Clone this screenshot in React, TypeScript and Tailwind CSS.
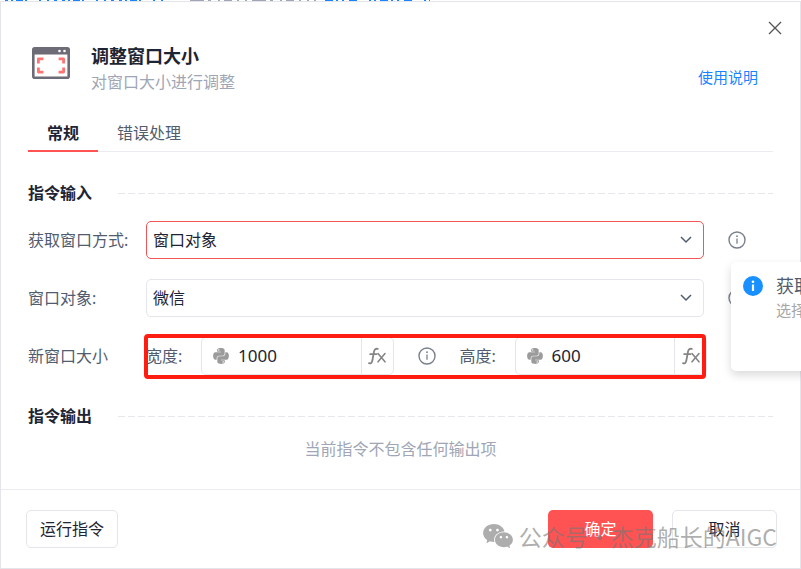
import { useState } from "react";
import { FaPython } from "react-icons/fa";
import { AiFillWechat } from "react-icons/ai";

const TABS = ["常规", "错误处理"];

// Edge of the page that lies behind the dialog
function BackdropEdge() {
  return (
    <svg className="block h-px w-full" shapeRendering="crispEdges" aria-hidden="true">
      <g strokeWidth="2" fill="none">
        <path d="M5 0H167" stroke="#1a84ff" strokeDasharray="3 3 2 3 7 2 2 12 2 6 2 5 3 5" />
        <path d="M190 0H316" stroke="#a0a6b5" strokeDasharray="14 4 3 7 2 4 8 5 2 6 2 5" />
        <path d="M325 0H430" stroke="#1a84ff" strokeDasharray="8 3 2 4 2 5 8 12 2 3 2 4" />
      </g>
    </svg>
  );
}

function InfoIcon() {
  return (
    <svg viewBox="0 0 18 18" className="block size-[18px] text-[#7a808c]" fill="none" stroke="currentColor" aria-hidden="true">
      <circle cx="9" cy="9" r="8" strokeWidth="1.4" />
      <path d="M9 7.6v5.2" strokeWidth="1.3" />
      <circle cx="9" cy="5.2" r="0.9" fill="currentColor" stroke="none" />
    </svg>
  );
}

function InfoButton({ label }: { label: string }) {
  return (
    <button type="button" aria-label={label} className="shrink-0">
      <InfoIcon />
    </button>
  );
}

function FxIcon() {
  return (
    <svg viewBox="0 0 20 18" className="h-[18px] w-5 shrink-0" fill="none" stroke="#858585" strokeWidth="1.8" strokeLinecap="round" aria-hidden="true">
      <path d="M2 16.2c1.8.5 2.9-.4 3.3-2.4L7 4.600C7.400 2.300 8.700 1.300 10.800 1.900" />
      <path d="M3.200 7.200h6.300" />
      <path d="M11 6.600l7 8.200M18 6.600l-7 8.200" strokeWidth="1.600" />
    </svg>
  );
}

function WindowIcon() {
  return (
    <svg viewBox="0 0 38 32" className="mb-3 h-8 w-[38px] shrink-0" aria-hidden="true">
      <rect x="1.3" y="1.3" width="35.4" height="29.4" rx="1.5" fill="#fff" stroke="#6c6b76" strokeWidth="2.6" />
      <path d="M1 2h36v5.5H1z" fill="#6c6b76" />
      <circle cx="27.5" cy="4" r="1.3" fill="#fff" />
      <circle cx="32.5" cy="4" r="1.3" fill="#fff" />
      <path
        d="M6.400 16.500v-4.600h5M26.600 11.900h5v4.600M6.400 20.500v4.600h5M26.600 25.100h5v-4.600"
        fill="none"
        stroke="#ff7373"
        strokeWidth="2.8"
        strokeLinejoin="round"
      />
    </svg>
  );
}

function SectionTitle({ children }: { children: string }) {
  return (
    <div className="flex h-6 items-center gap-[26px]">
      <h2 className="text-base leading-6 font-bold">{children}</h2>
      <div className="h-px flex-1 bg-[repeating-linear-gradient(90deg,#e6e7ea_0_7px,transparent_7px_10px)]" />
    </div>
  );
}

interface SelectRowProps {
  id: string;
  label: string;
  value: string;
  active?: boolean;
}

function SelectRow({ id, label, value, active }: SelectRowProps) {
  return (
    <div className="flex items-center">
      <label htmlFor={id} className="w-[118px] shrink-0 text-base text-[#515c6e]">
        {label}
      </label>
      <div className="relative flex-1">
        <select
          id={id}
          className={[
            "block h-[38px] w-full appearance-none rounded-[5px] border bg-white px-1.5 text-base outline-none",
            active ? "border-[#f25555]" : "border-[#e4e6eb]",
          ].join(" ")}
        >
          <option>{value}</option>
        </select>
        <svg viewBox="0 0 12 8" className="pointer-events-none absolute top-[15px] right-3 h-2 w-3" fill="none" stroke="#515c6e" strokeWidth="1.5" aria-hidden="true">
          <path d="M1 1l5 5 5-5" />
        </svg>
      </div>
      <div className="flex w-[69px] shrink-0 pl-6">
        <InfoButton label={`${label} 说明`} />
      </div>
    </div>
  );
}

function SizeField({ id, label, initial }: { id: string; label: string; initial: string }) {
  const [value, setValue] = useState(initial);
  return (
    <div className="flex min-w-0 flex-1 items-center">
      <label htmlFor={id} className="w-[55px] shrink-0 text-base text-[#515c6e]">
        {label}
      </label>
      <div className="flex h-[38px] min-w-0 flex-1 rounded-[5px] border border-[#e4e6eb]">
        <div className="flex min-w-0 flex-1 items-center gap-2 pl-2.5">
          <FaPython className="size-[18px] shrink-0 text-[#9b9b9b]" aria-hidden="true" />
          <input
            id={id}
            value={value}
            onChange={(e) => setValue(e.target.value)}
            className="w-full min-w-0 bg-transparent text-[17px] outline-none"
          />
        </div>
        <button type="button" aria-label={`${label} 表达式`} className="flex w-8 shrink-0 items-center justify-center border-l border-[#e4e6eb]">
          <FxIcon />
        </button>
      </div>
    </div>
  );
}

export default function App() {
  const [tab, setTab] = useState(TABS[0]);

  return (
    <div className="relative flex min-h-screen flex-col overflow-hidden bg-white font-['Noto_Sans','Noto_Sans_CJK_SC',sans-serif] text-[#1d2433]">
      <BackdropEdge />
      <div className="flex flex-1 flex-col border border-[#e4e5eb]">
        <header className="px-[27px] pt-[17px]">
          <div className="flex justify-end">
            <button type="button" aria-label="关闭" className="-mr-[11px]">
              <svg viewBox="0 0 18 18" className="size-[18px]" stroke="#555" strokeWidth="1.3" aria-hidden="true">
                <path d="M3 3l12 12M15 3L3 15" />
              </svg>
            </button>
          </div>
          <div className="mt-1.5 flex items-center pl-1">
            <WindowIcon />
            <div className="ml-[21px] flex-1">
              <h1 className="text-lg leading-[26px] font-bold">调整窗口大小</h1>
              <p className="text-base leading-[26px] text-[#a0a6b5]">对窗口大小进行调整</p>
            </div>
            <a href="#help" className="mr-[15px] pt-4 text-[15px] text-[#1a84ff]">
              使用说明
            </a>
          </div>
          <nav className="mt-[21px] flex border-b border-[#ebecef]" role="tablist">
            {TABS.map((name) => (
              <button
                key={name}
                type="button"
                role="tab"
                aria-selected={tab === name}
                onClick={() => setTab(name)}
                className={[
                  "-mb-px h-9 border-b-2 px-[19px] text-base",
                  tab === name ? "border-[#ff5252] font-bold" : "border-transparent text-[#515c6e]",
                ].join(" ")}
              >
                {name}
              </button>
            ))}
          </nav>
        </header>

        <main className="px-[27px] pt-[29px]">
          <SectionTitle>指令输入</SectionTitle>
          <div className="mt-4 flex flex-col gap-5">
            <SelectRow id="mode" label="获取窗口方式:" value="窗口对象" active />
            <SelectRow id="target" label="窗口对象:" value="微信" />
            <div className="flex items-center">
              <span className="w-[118px] shrink-0 text-base text-[#515c6e]">新窗口大小</span>
              <div className="relative mr-[66px] flex min-w-0 flex-1 items-center">
                <SizeField id="width" label="宽度:" initial="1000" />
                <div className="mx-6 flex">
                  <InfoButton label="宽度说明" />
                </div>
                <SizeField id="height" label="高度:" initial="600" />
                {/* Highlight frame */}
                <div className="pointer-events-none absolute -top-[3px] right-px -bottom-1 -left-0.5 rounded-[4px] border-4 border-[#ff1d12]" />
              </div>
            </div>
          </div>
          <div className="mt-[29px]">
            <SectionTitle>指令输出</SectionTitle>
          </div>
          <p className="mt-[9px] text-center text-base text-[#a0a6b5]">当前指令不包含任何输出项</p>
        </main>

        <footer className="mt-auto flex h-[79px] items-center border-t border-[#ebecf0] pr-[23px] pl-[25px]">
          <button type="button" className="h-[38px] w-[92px] rounded-[5px] border border-[#e4e6eb] text-base">
            运行指令
          </button>
          <button type="button" className="ml-auto h-[38px] w-[105px] rounded-[5px] bg-[#ff5252] text-base text-white">
            确定
          </button>
          <button type="button" className="ml-[19px] h-[38px] w-[105px] rounded-[5px] border border-[#e4e6eb] text-base">
            取消
          </button>
        </footer>
      </div>

      <aside className="absolute top-[262px] left-[731px] flex h-[109px] w-80 gap-[13px] rounded-[5px] bg-white pt-3.5 pl-3 shadow-[0_4px_10px_rgba(0,0,0,0.15)]">
        <svg viewBox="0 0 20 20" className="size-5 shrink-0" aria-hidden="true">
          <circle cx="10" cy="10" r="10" fill="#1890ff" />
          <path d="M10 8.5v6.5" stroke="#fff" strokeWidth="2.2" />
          <circle cx="10" cy="5.8" r="1.3" fill="#fff" />
        </svg>
        <div className="whitespace-nowrap">
          <p className="text-lg leading-5 text-[#515c6e]">获取窗口方式</p>
          <p className="mt-1 text-[15px] leading-5 text-[#a6a6a6]">选择获取窗口的方式</p>
        </div>
      </aside>

      {/* Account watermark */}
      <div className="pointer-events-none absolute right-6 bottom-[17px] flex h-8 items-center gap-1 font-['Noto_Sans_CJK_SC',sans-serif] text-[#777]/60">
        <AiFillWechat className="size-[34px]" aria-hidden="true" />
        <span className="text-[23px]">公众号·杰克船长的AIGC</span>
      </div>
    </div>
  );
}
